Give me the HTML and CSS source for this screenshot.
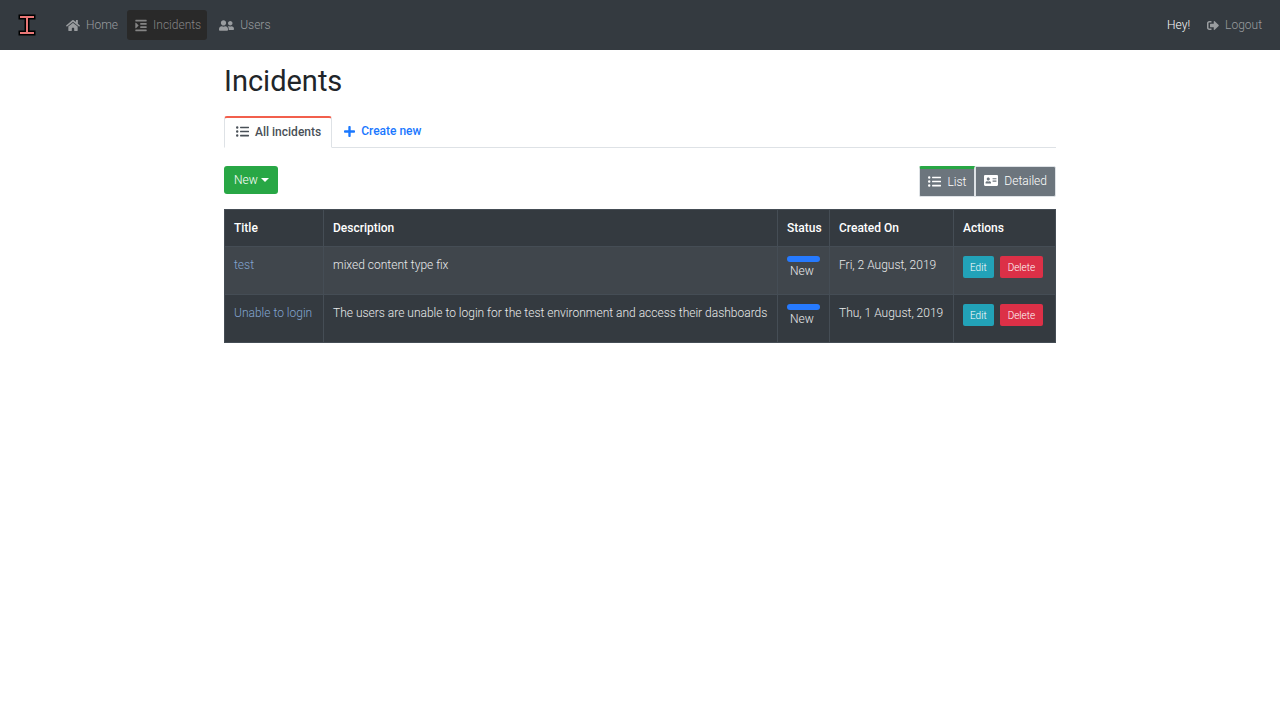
FILE: index.html
```html
<!DOCTYPE html>
<html lang="en">
<head>
<meta charset="utf-8">
<title>Incidents</title>
<link rel="stylesheet" href="styles.css">
</head>
<body>
<svg class="sprite" aria-hidden="true">
  <symbol id="home" viewBox="0 0 576 512"><path d="M280.37 148.26L96 300.11V464a16 16 0 0 0 16 16l112.06-.29a16 16 0 0 0 15.92-16V368a16 16 0 0 1 16-16h64a16 16 0 0 1 16 16v95.64a16 16 0 0 0 16 16.05L464 480a16 16 0 0 0 16-16V300L295.67 148.26a12.19 12.19 0 0 0-15.3 0zM571.6 251.47L488 182.56V44.05a12 12 0 0 0-12-12h-56a12 12 0 0 0-12 12v72.61L318.47 43a48 48 0 0 0-61 0L4.34 251.47a12 12 0 0 0-1.6 16.9l25.5 31A12 12 0 0 0 45.15 301l235.22-193.74a12.19 12.19 0 0 1 15.3 0L530.9 301a12 12 0 0 0 16.9-1.6l25.5-31a12 12 0 0 0-1.7-16.93z"/></symbol>
  <symbol id="indent" viewBox="0 0 448 512"><path d="M27.31 363.3l96-96a16 16 0 0 0 0-22.62l-96-96C17.27 138.66 0 145.78 0 160v192c0 14.31 17.33 21.3 27.31 11.3zM432 416H16a16 16 0 0 0-16 16v32a16 16 0 0 0 16 16h416a16 16 0 0 0 16-16v-32a16 16 0 0 0-16-16zm3.17-128H204.83A12.82 12.82 0 0 0 192 300.83v38.34A12.82 12.82 0 0 0 204.83 352h230.34A12.82 12.82 0 0 0 448 339.17v-38.34A12.82 12.82 0 0 0 435.17 288zm0-128H204.83A12.82 12.82 0 0 0 192 172.83v38.34A12.82 12.82 0 0 0 204.83 224h230.34A12.82 12.82 0 0 0 448 211.17v-38.34A12.82 12.82 0 0 0 435.17 160zM432 32H16A16 16 0 0 0 0 48v32a16 16 0 0 0 16 16h416a16 16 0 0 0 16-16V48a16 16 0 0 0-16-16z"/></symbol>
  <symbol id="users" viewBox="0 0 640 512"><path d="M192 256c61.9 0 112-50.1 112-112S253.9 32 192 32 80 82.1 80 144s50.1 112 112 112zm76.8 32h-8.3c-20.8 10-43.9 16-68.5 16s-47.6-6-68.5-16h-8.3C51.6 288 0 339.6 0 403.2V432c0 26.5 21.5 48 48 48h288c26.5 0 48-21.5 48-48v-28.8c0-63.6-51.6-115.2-115.2-115.2zM480 256c53 0 96-43 96-96s-43-96-96-96-96 43-96 96 43 96 96 96zm48 32h-3.8c-13.9 4.8-28.6 8-44.2 8s-30.3-3.2-44.2-8H432c-20.4 0-39.2 5.9-55.7 15.4 24.4 26.3 39.7 61.2 39.7 99.8v38.4c0 2.2-.5 4.3-.6 6.4H592c26.5 0 48-21.5 48-48 0-61.9-50.1-112-112-112z"/></symbol>
  <symbol id="logout" viewBox="0 0 512 512"><path d="M497 273L329 441c-15 15-41 4.500-41-17v-96H152c-13.300 0-24-10.700-24-24v-96c0-13.300 10.700-24 24-24h136V88c0-21.400 25.900-32 41-17l168 168c9.300 9.400 9.300 24.600 0 34zM192 436v-40c0-6.600-5.400-12-12-12H96c-17.700 0-32-14.300-32-32V160c0-17.700 14.300-32 32-32h84c6.600 0 12-5.400 12-12V76c0-6.600-5.400-12-12-12H96c-53 0-96 43-96 96v192c0 53 43 96 96 96h84c6.600 0 12-5.400 12-12z"/></symbol>
  <symbol id="list" viewBox="0 0 512 512"><path d="M48 48a48 48 0 1 0 48 48 48 48 0 0 0-48-48zm0 160a48 48 0 1 0 48 48 48 48 0 0 0-48-48zm0 160a48 48 0 1 0 48 48 48 48 0 0 0-48-48zm448 16H176a16 16 0 0 0-16 16v32a16 16 0 0 0 16 16h320a16 16 0 0 0 16-16v-32a16 16 0 0 0-16-16zm0-320H176a16 16 0 0 0-16 16v32a16 16 0 0 0 16 16h320a16 16 0 0 0 16-16V80a16 16 0 0 0-16-16zm0 160H176a16 16 0 0 0-16 16v32a16 16 0 0 0 16 16h320a16 16 0 0 0 16-16v-32a16 16 0 0 0-16-16z"/></symbol>
  <symbol id="plus" viewBox="0 0 448 512"><path d="M416 208H272V64c0-17.670-14.330-32-32-32h-32c-17.670 0-32 14.330-32 32v144H32c-17.670 0-32 14.330-32 32v32c0 17.670 14.330 32 32 32h144v144c0 17.670 14.330 32 32 32h32c17.670 0 32-14.330 32-32V304h144c17.670 0 32-14.330 32-32v-32c0-17.670-14.330-32-32-32z"/></symbol>
  <symbol id="card" viewBox="0 0 576 512"><path d="M528 32H48C21.500 32 0 53.500 0 80v352c0 26.500 21.500 48 48 48h480c26.500 0 48-21.500 48-48V80c0-26.500-21.500-48-48-48zm-352 96c35.300 0 64 28.700 64 64s-28.700 64-64 64-64-28.700-64-64 28.700-64 64-64zm112 236.800c0 10.600-10 19.200-22.400 19.200H86.400C74 384 64 375.400 64 364.800v-19.200c0-31.800 30.100-57.600 67.200-57.600h5c12.300 5.100 25.700 8 39.800 8s27.600-2.900 39.800-8h5c37.100 0 67.200 25.800 67.200 57.600v19.200zM512 312c0 4.400-3.600 8-8 8H360c-4.400 0-8-3.600-8-8v-16c0-4.400 3.600-8 8-8h144c4.400 0 8 3.600 8 8v16zm0-64c0 4.400-3.600 8-8 8H360c-4.400 0-8-3.600-8-8v-16c0-4.400 3.600-8 8-8h144c4.400 0 8 3.600 8 8v16zm0-64c0 4.400-3.600 8-8 8H360c-4.400 0-8-3.600-8-8v-16c0-4.400 3.600-8 8-8h144c4.400 0 8 3.600 8 8v16z"/></symbol>
</svg>

<nav class="navbar">
  <a class="brand" href="#" aria-label="Incidents home">
    <svg viewBox="0 0 18 24" aria-hidden="true"><path class="brand-edge" d="M3 4H15M9 4V20M3 20H15"/><path class="brand-fill" d="M3 4H15M9 4V20M3 20H15"/></svg>
  </a>
  <a class="nav-link" href="#"><svg class="icon w14"><use href="#home"/></svg>Home</a>
  <a class="nav-link current" href="#" aria-current="page"><svg class="icon w12"><use href="#indent"/></svg>Incidents</a>
  <a class="nav-link" href="#"><svg class="icon w15"><use href="#users"/></svg>Users</a>
  <span class="greeting">Hey!</span>
  <a class="nav-link" href="#"><svg class="icon w12"><use href="#logout"/></svg>Logout</a>
</nav>

<main class="container">
  <h1>Incidents</h1>
  <nav class="tabs">
    <a class="tab selected" href="#"><svg class="icon"><use href="#list"/></svg>All incidents</a>
    <a class="tab" href="#"><svg class="icon plus"><use href="#plus"/></svg>Create new</a>
  </nav>
  <div class="toolbar">
    <button class="new-button" type="button">New<span class="caret"></span></button>
    <div class="views">
      <button class="view chosen" type="button"><svg class="icon"><use href="#list"/></svg>List</button>
      <button class="view" type="button"><svg class="icon w14"><use href="#card"/></svg>Detailed</button>
    </div>
  </div>
  <table class="incidents">
    <colgroup><col class="col-title"><col><col class="col-status"><col class="col-created"><col class="col-actions"></colgroup>
    <thead>
      <tr><th>Title</th><th>Description</th><th>Status</th><th>Created On</th><th>Actions</th></tr>
    </thead>
    <tbody>
      <tr>
        <td><a class="title-link" href="#">test</a></td>
        <td>mixed content type fix</td>
        <td><div class="status-bar"></div><div class="status">New</div></td>
        <td>Fri, 2 August, 2019</td>
        <td><div class="actions"><button class="small edit" type="button">Edit</button><button class="small delete" type="button">Delete</button></div></td>
      </tr>
      <tr>
        <td><a class="title-link" href="#">Unable to login</a></td>
        <td>The users are unable to login for the test environment and access their dashboards</td>
        <td><div class="status-bar"></div><div class="status">New</div></td>
        <td>Thu, 1 August, 2019</td>
        <td><div class="actions"><button class="small edit" type="button">Edit</button><button class="small delete" type="button">Delete</button></div></td>
      </tr>
    </tbody>
  </table>
</main>
</body>
</html>
```
FILE: styles.css
```css
* { box-sizing: border-box; }
body {
  margin: 0;
  background: #fff;
  color: #212529;
  font: 300 12px/18px Roboto, "Liberation Sans", sans-serif;
}
a { text-decoration: none; }
button { font: inherit; margin: 0; cursor: pointer; }
.sprite { display: none; }
.icon { width: 13px; height: 13px; flex: none; fill: currentColor; }
.w12 { width: 12px; }
.w14 { width: 14px; }
.w15 { width: 15px; }
.plus { width: 11px; }

.navbar {
  display: flex;
  align-items: center;
  height: 50px;
  padding: 0 18px;
  background: #343a40;
}
.brand { width: 18px; height: 24px; margin-right: 24px; }
.brand svg { display: block; width: 18px; height: 24px; }
.brand path { fill: none; stroke-linecap: square; }
.brand-edge { stroke: #000; stroke-width: 5; }
.brand-fill { stroke: #e97777; stroke-width: 2; }
.nav-link {
  display: flex;
  align-items: center;
  gap: 6px;
  padding: 6px;
  border-radius: 3px;
  color: #999c9f;
}
.nav-link:last-child { padding-right: 0; }
.brand + .nav-link { padding-right: 9px; }
.current { margin-right: 6px; padding-left: 8px; background: #292929; color: #858585; }
.greeting { margin-left: auto; padding-right: 11px; color: #f8f9fa; }

.container { width: 65%; margin: 0 auto; padding-top: 12px; }
h1 { margin: 0 0 15px; font-size: 29px; line-height: 39px; font-weight: 400; }
.tabs { display: flex; height: 32px; border-bottom: 1px solid #dee2e6; font-weight: 500; }
.tab {
  display: flex;
  align-items: center;
  gap: 6px;
  height: 30px;
  padding: 0 12px;
  color: #1a78ff;
}
.selected {
  height: 32px;
  padding: 0 10px 2px 11px;
  border: 1px solid #dee2e6;
  border-top: 2px solid #f25f4c;
  border-bottom-color: #fff;
  border-radius: 3px 3px 0 0;
  background: #fff;
  color: #495057;
}
.toolbar { display: flex; justify-content: space-between; margin: 18px 0 12px; }
.new-button {
  display: flex;
  align-items: center;
  gap: 3px;
  height: 28px;
  padding: 0 9px 0 10px;
  border: 0;
  border-radius: 3px;
  background: #28a745;
  color: #fff;
}
.caret { border: 4px solid transparent; border-top-color: #fff; border-bottom: 0; }
.views { display: flex; }
.view {
  display: flex;
  align-items: center;
  gap: 6px;
  height: 31px;
  padding: 0 8px 2px;
  border: 1px solid #dee2e6;
  border-radius: 0 2px 2px 0;
  background: #6c757d;
  color: #fff;
}
.chosen { border-top: 3px solid #28a745; border-radius: 2px 0 0 2px; }

.incidents {
  width: 100%;
  table-layout: fixed;
  border-collapse: collapse;
  background: #343a40;
  color: #e9eaeb;
}
.col-title { width: 99px; }
.col-status { width: 52px; }
.col-created { width: 124px; }
.col-actions { width: 102px; }
.incidents th, .incidents td {
  padding: 9px;
  border: 1px solid #454d55;
  text-align: left;
  vertical-align: top;
}
.incidents th { color: #fff; font-weight: 500; white-space: nowrap; }
.incidents td { height: 48px; }
.incidents tbody tr:first-child { background: #40464c; }
.title-link { color: #83a5d0; }
.status-bar { height: 6px; border-radius: 3px; background: #267aff; }
.status { padding-left: 3px; }
.actions { display: flex; gap: 6px; }
.small {
  height: 22px;
  padding: 1px 7px 0;
  border: 0;
  border-radius: 2px;
  color: #fff;
  font-size: 10px;
}
.edit { background: #22a2b8; }
.delete { padding: 1px 8px 0; background: #dc3047; }
```
